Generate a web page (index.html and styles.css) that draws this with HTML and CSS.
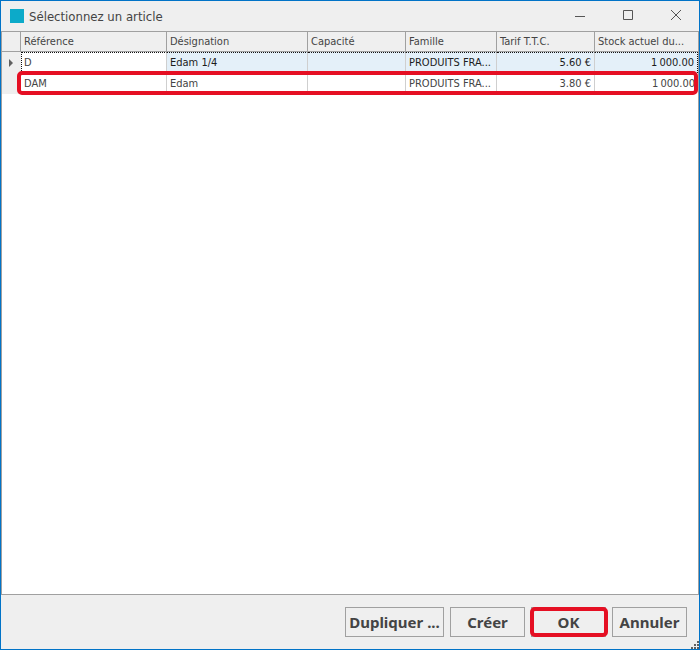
FILE: index.html
```html
<!DOCTYPE html>
<html lang="fr">
<head>
<meta charset="utf-8">
<title>Sélectionnez un article</title>
<link rel="stylesheet" href="styles.css">
</head>
<body>
<div class="window">
  <header class="titlebar">
    <span class="app-icon"></span>
    <h1 class="title">Sélectionnez un article</h1>
    <div class="controls">
      <button type="button" class="control" aria-label="Réduire"><svg width="12" height="12" viewBox="0 0 12 12"><path d="M2 6.500h10"/></svg></button>
      <button type="button" class="control" aria-label="Agrandir"><svg width="12" height="12" viewBox="0 0 12 12"><path d="M2.500 .5h9v9h-9z"/></svg></button>
      <button type="button" class="control" aria-label="Fermer"><svg width="12" height="12" viewBox="0 0 12 12"><path d="M2 0l10 10M12 0L2 10"/></svg></button>
    </div>
  </header>
  <main class="grid">
    <table class="articles">
      <colgroup>
        <col class="col-mark"><col class="col-ref"><col class="col-name"><col class="col-cap"><col class="col-family"><col class="col-price"><col class="col-stock">
      </colgroup>
      <thead>
        <tr><th></th><th>Référence</th><th>Désignation</th><th>Capacité</th><th>Famille</th><th>Tarif T.T.C.</th><th>Stock actuel du...</th></tr>
      </thead>
      <tbody>
        <tr class="current"><td class="mark"><svg width="4" height="8" viewBox="0 0 4 8"><path d="M0 0l4 4-4 4z"/></svg></td><td class="focused">D</td><td>Edam 1/4</td><td></td><td>PRODUITS FRA...</td><td class="num">5.60 €</td><td class="num last">1&#8239;000.00</td></tr>
        <tr class="marked"><td class="mark"></td><td>DAM</td><td>Edam</td><td></td><td>PRODUITS FRA...</td><td class="num">3.80 €</td><td class="num last">1&#8239;000.00</td></tr>
      </tbody>
    </table>
  </main>
  <footer class="actions">
    <button type="button" class="btn btn-wide">Dupliquer ...</button>
    <button type="button" class="btn">Créer</button>
    <button type="button" class="btn btn-ok">OK</button>
    <button type="button" class="btn">Annuler</button>
    <svg class="grip" width="8" height="8" viewBox="0 0 8 8"><path d="M6 0h2v2h-2zM3 3h2v2h-2zM6 3h2v2h-2zM0 6h2v2h-2zM3 6h2v2h-2zM6 6h2v2h-2z"/></svg>
  </footer>
</div>
</body>
</html>
```
FILE: styles.css
```css
* { box-sizing: border-box; }

body {
  margin: 0;
  font-family: Tahoma, "DejaVu Sans Condensed", "Noto Sans", sans-serif;
  font-size: 11px;
  color: #444;
}

button { font-family: inherit; color: inherit; }

.window {
  display: flex;
  flex-direction: column;
  min-height: 100vh;
  border: 1px solid #0173c7;
  background: #efefef;
}

.titlebar {
  display: flex;
  align-items: center;
  height: 30px;
  padding-left: 9px;
}

.app-icon {
  width: 14px;
  height: 14px;
  background: #0caac9;
}

.title {
  flex: 1;
  margin: 0 0 0 5px;
  font-size: 13px;
  font-weight: 400;
}

.controls { display: flex; }

.control {
  display: flex;
  align-items: center;
  justify-content: center;
  width: 48px;
  height: 30px;
  padding: 0;
  border: 0;
  background: none;
}

.control svg { fill: none; stroke: #555; }

.grid {
  flex: 1;
  border: 1px solid #a0a0a0;
  background: #fff;
}

.articles {
  width: 100%;
  table-layout: fixed;
  border-collapse: separate;
  border-spacing: 0;
}

.col-mark { width: 19px; }
.col-ref { width: 146px; }
.col-name { width: 141px; }
.col-cap { width: 98px; }
.col-family { width: 91px; }
.col-price { width: 98px; }
.col-stock { width: 103px; }

th, td {
  padding: 0 3px;
  overflow: hidden;
  text-overflow: ellipsis;
  white-space: nowrap;
  text-align: left;
  font-weight: 400;
}

th {
  height: 20px;
  border-right: 1px solid #a0a0a0;
  border-bottom: 1px solid #a0a0a0;
  background: #efefef;
}

th:last-child { border-right: 0; }

td {
  height: 21px;
  border-right: 1px solid #cfcfcf;
}

.num { text-align: right; }
.last { border-right: 0; }

.current td {
  border-top: 1px dotted #111;
  padding-bottom: 2px;
  background: #e4f0f9;
  color: #1c1c1c;
}

.current .focused {
  border-left: 1px dotted #111;
  padding-left: 2px;
  background: #fff;
  color: #444;
}

.current .last {
  border-right: 1px dotted #111;
}

.mark, .current .mark {
  padding: 0;
  border-top: 0;
  border-right-color: #efefef;
  background: #efefef;
  text-align: center;
}

.mark svg { display: block; margin: 0 auto; fill: #606060; }

.marked { position: relative; }

.marked::after {
  content: "";
  position: absolute;
  inset: -2px 0 -1px 15px;
  border: 4px solid #e50f23;
  border-radius: 5px;
}

.actions {
  position: relative;
  display: flex;
  justify-content: flex-end;
  gap: 6px;
  padding: 12px 12px;
}

.btn {
  width: 75px;
  height: 30px;
  padding: 0;
  border: 1px solid #a0a0a0;
  background: #efefef;
  font-family: "Noto Sans", sans-serif;
  font-size: 15px;
  font-weight: 700;
}

.btn-wide { width: 99px; }

.btn-ok { position: relative; }

.btn-ok::after {
  content: "";
  position: absolute;
  inset: -1px -3px -1px -2px;
  border: 4px solid #e50f23;
  border-radius: 5px;
}

.grip {
  position: absolute;
  right: 0;
  bottom: 0;
  fill: #606060;
}
```
